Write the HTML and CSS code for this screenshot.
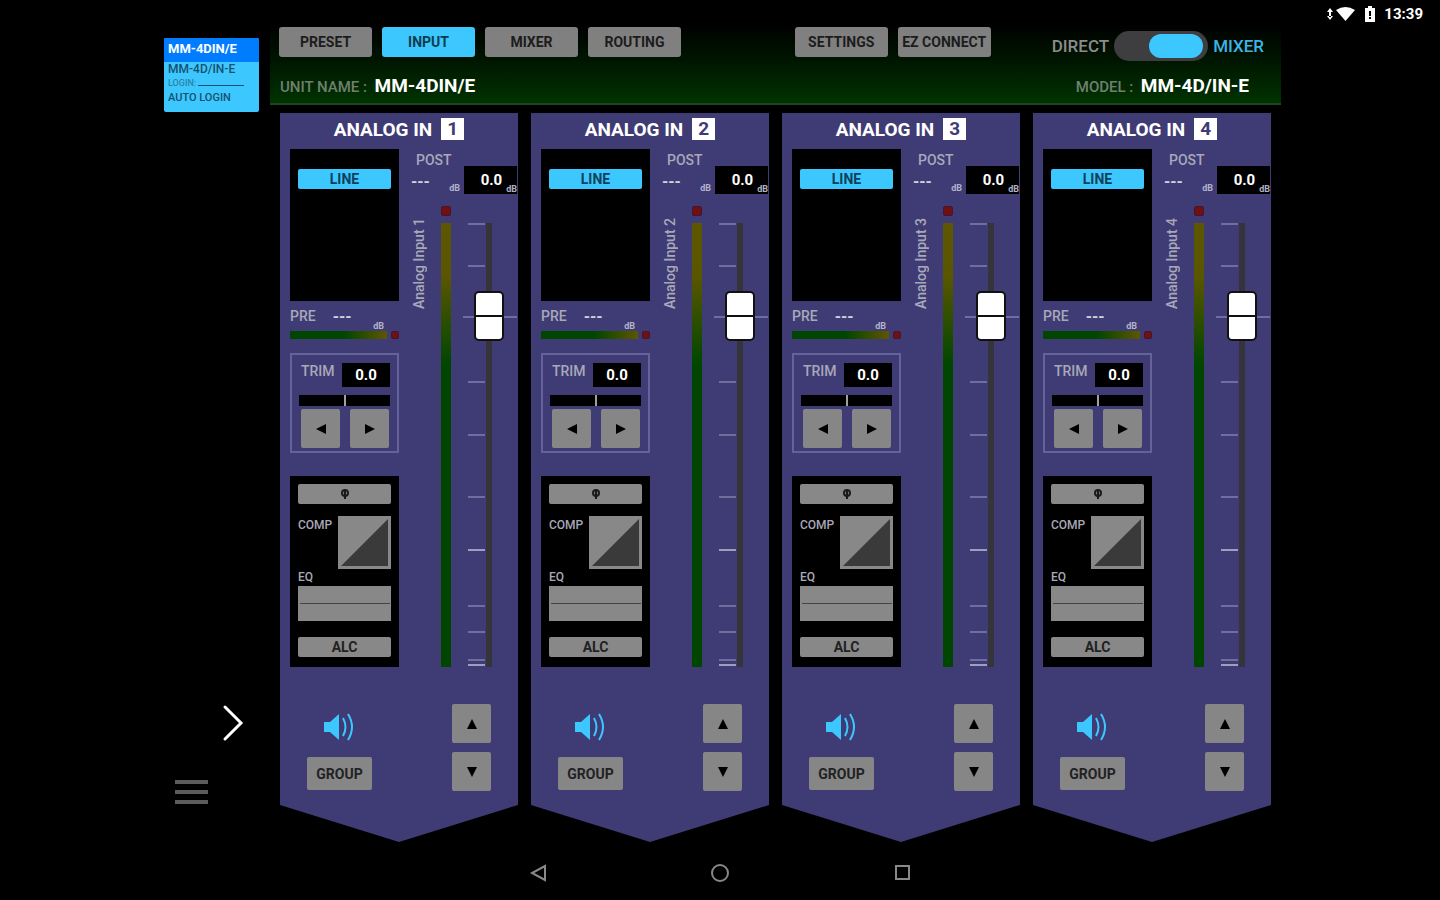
FILE: index.html
```
<!DOCTYPE html>
<html lang="en">
<head>
    <meta charset="UTF-8">
    <meta name="viewport" content="width=device-width, initial-scale=1.0">
    <title>MM-4D/IN-E Mixer</title>
    <link rel="stylesheet" href="styles.css">
</head>
<body>

<div class="status-bar">
    <svg width="30" height="16" viewBox="0 0 30 16" fill="#fff">
        <path d="M4 2l3 4H1zM4 14l3-4H1z M3 5h2v6H3z"/>
        <path d="M10 4Q19.500 -2 29 4L19.500 15z"/>
    </svg>
    <svg width="10" height="16" viewBox="0 0 10 16">
        <path d="M3 0h4v2h3v14H0V2h3z" fill="#fff"/>
        <path d="M4 5h2v5H4zM4 11h2v2H4z" fill="#000"/>
    </svg>
    <span>13:39</span>
</div>

<div class="app">
    <aside class="sidebar">
        <div class="device">
            <div class="device-name">MM-4DIN/E</div>
            <div class="device-model">MM-4D/IN-E</div>
            <div class="device-login">LOGIN: <span class="login-line"></span></div>
            <div class="device-auto">AUTO LOGIN</div>
        </div>
        <button class="icon-btn next-btn" aria-label="Next">
            <svg width="22" height="38" viewBox="0 0 22 38" fill="none" stroke="#fff" stroke-width="3" stroke-linecap="round"><path d="M3 3l16 16L3 35"/></svg>
        </button>
        <button class="icon-btn menu-btn" aria-label="Menu">
            <svg width="34" height="28" viewBox="0 0 34 28" fill="#5c5c5c"><path d="M0 2h33v4H0zM0 12h33v4H0zM0 22h33v4H0z"/></svg>
        </button>
    </aside>

    <main class="main">
        <header class="header">
            <div class="toolbar">
                <nav class="tabs">
                    <button class="tab">PRESET</button>
                    <button class="tab active">INPUT</button>
                    <button class="tab">MIXER</button>
                    <button class="tab">ROUTING</button>
                </nav>
                <div class="tabs tools">
                    <button class="tab">SETTINGS</button>
                    <button class="tab">EZ CONNECT</button>
                </div>
                <label class="mode"><span>DIRECT</span><input type="checkbox" class="switch" checked><span class="mode-on">MIXER</span></label>
            </div>
            <div class="unit-info">
                <div><span class="info-label">UNIT NAME :</span> <strong>MM-4DIN/E</strong></div>
                <div><span class="info-label">MODEL :</span> <strong>MM-4D/IN-E</strong></div>
            </div>
        </header>

        <div class="strips" id="strips">
            <section class="strip">
                <h2>ANALOG IN <span class="num">1</span></h2>
                <div class="strip-body">
                    <div class="left">
                        <div class="source"><button class="key on">LINE</button></div>
                        <div class="pre"><span>PRE</span><span class="dashes">---</span><span class="db">dB</span></div>
                        <div class="pre-meter"><i class="bar"></i><i class="clip"></i></div>
                        <div class="trim">
                            <div class="trim-head"><span>TRIM</span><output class="value">0.0</output></div>
                            <input type="range" class="trim-slider" aria-label="Trim">
                            <div class="trim-keys">
                                <button class="square" aria-label="Trim down"><svg width="12" height="12" viewBox="0 0 12 12"><path d="M11 1v10L1 6z"/></svg></button>
                                <button class="square" aria-label="Trim up"><svg width="12" height="12" viewBox="0 0 12 12"><path d="M1 1v10l10-5z"/></svg></button>
                            </div>
                        </div>
                        <div class="dsp">
                            <button class="key phase" aria-label="Phase">
                                <svg width="12" height="12" viewBox="0 0 12 12" fill="none" stroke="#1a1a1a" stroke-width="2"><circle cx="6" cy="5" r="3"/><path d="M6 3v8"/></svg>
                            </button>
                            <div class="comp">
                                <span>COMP</span>
                                <svg width="53" height="53" viewBox="0 0 53 53"><path d="M0 0h53v53H0z" fill="#888"/><path d="M50 3v47H3z" fill="#3a3a3a"/></svg>
                            </div>
                            <span class="eq-label">EQ</span>
                            <div class="eq"></div>
                            <button class="key">ALC</button>
                        </div>
                    </div>
                    <div class="right">
                        <div class="post">
                            <div class="post-level">
                                <span class="post-label">POST</span>
                                <div class="post-read"><span class="dashes">---</span><span class="db">dB</span></div>
                            </div>
                            <div class="value post-value"><output>0.0</output><span class="db">dB</span></div>
                        </div>
                        <div class="levels">
                            <span class="ch-name">Analog Input <b>1</b></span>
                            <div class="meter"><i class="clip"></i><i class="bar"></i></div>
                            <div class="fader">
                                <svg width="56" height="444" viewBox="0 0 56 444" stroke="#706e9e" stroke-width="2">
                                    <path d="M25 0h6v444h-6z" fill="#34343a" stroke="none"/>
                                    <path d="M7 1h17M7 43h17M2 94h54M7 159h17M7 212h17M7 274h17M7 327h17M7 383h17M7 409h17M7 437h17"/>
                                    <path d="M7 327h17M7 442h17" stroke="#a09ebe"/>
                                </svg>
                                <input type="range" min="0" max="1000" value="827" aria-label="Level">
                            </div>
                        </div>
                    </div>
                </div>
                <div class="strip-foot">
                    <div class="foot-left">
                        <button class="icon-btn" aria-label="Mute">
                            <svg width="32" height="30" viewBox="0 0 32 30" fill="none" stroke="#3cc8ff" stroke-width="2"><path d="M0 10h6l9-8v26l-9-8H0z" fill="#3cc8ff" stroke="none"/><path d="M19 6q5 9 0 18M24 2q8 13 0 26"/></svg>
                        </button>
                        <button class="group">GROUP</button>
                    </div>
                    <div class="foot-right">
                        <button class="square" aria-label="Level up"><svg width="12" height="12" viewBox="0 0 12 12"><path d="M1 11h10L6 1z"/></svg></button>
                        <button class="square" aria-label="Level down"><svg width="12" height="12" viewBox="0 0 12 12"><path d="M1 1h10L6 11z"/></svg></button>
                    </div>
                </div>
            </section>
        </div>
    </main>
</div>

<nav class="system-nav">
    <button class="icon-btn" aria-label="Back"><svg width="20" height="20" viewBox="0 0 20 20"><path d="M17 3v14L4 10z"/></svg></button>
    <button class="icon-btn" aria-label="Home"><svg width="20" height="20" viewBox="0 0 20 20"><circle cx="10" cy="10" r="8"/></svg></button>
    <button class="icon-btn" aria-label="Recent"><svg width="20" height="20" viewBox="0 0 20 20"><path d="M4 3h13v13H4z"/></svg></button>
</nav>

<script>
    // All channels share the layout of the first strip
    const strips = document.getElementById('strips');
    const first = strips.querySelector('.strip');

    for (let i = 2; i <= 4; i++) {
        const strip = first.cloneNode(true);
        strip.querySelector('.num').textContent = i;
        strip.querySelector('.ch-name b').textContent = i;
        strips.appendChild(strip);
    }
</script>

</body>
</html>
```
FILE: styles.css
```
* { box-sizing: border-box; }
body {
    margin: 0;
    min-height: 100vh;
    display: flex;
    flex-direction: column;
    background: #000;
    color: #a8a8b8;
    font-family: Roboto, Arial, sans-serif;
    font-size: 14px;
    font-weight: 500;
}
button {
    font-family: inherit;
    padding: 0;
    border: none;
    cursor: pointer;
}
svg { display: block; }
.icon-btn { background: none; }

/* Android status bar */
.status-bar {
    height: 24px;
    padding: 4px 17px 0 0;
    display: flex;
    justify-content: flex-end;
    align-items: center;
    gap: 9px;
    color: #fff;
    font-size: 15px;
    font-weight: bold;
}

.app {
    flex: 1;
    display: flex;
    padding: 0 159px 0 164px;
}

/* Device list */
.sidebar {
    width: 106px;
    padding: 14px 11px 36px 0;
    display: flex;
    flex-direction: column;
}
.device {
    height: 74px;
    background: #3cc8ff;
    border-radius: 2px;
    color: #16506e;
    overflow: hidden;
    white-space: nowrap;
}
.device div { padding-left: 4px; }
.device .device-name {
    height: 24px;
    line-height: 22px;
    background: #007dff;
    color: #fff;
    font-size: 13px;
    font-weight: bold;
}
.device-model { font-size: 12px; line-height: 15px; }
.device-login { font-size: 9px; line-height: 13px; color: #2c83a8; }
.device-auto { font-size: 11px; line-height: 16px; }
.login-line {
    display: inline-block;
    width: 46px;
    border-bottom: 1px solid #16506e;
}
.next-btn {
    margin-top: auto;
    align-self: flex-end;
    margin-right: 15px;
}
.menu-btn {
    margin: 36px 0 0 11px;
    align-self: flex-start;
}

.main { flex: 1; }

/* Header */
.header {
    height: 81px;
    padding: 3px 0 0 9px;
    background: linear-gradient(#000, #001500 45%, #003300);
    border-bottom: 2px solid #1d4524;
}
.toolbar, .tabs, .mode { display: flex; align-items: center; }
.toolbar { align-items: flex-start; }
.tabs { gap: 10px; }
.tab {
    width: 93px;
    height: 30px;
    border-radius: 3px;
    background: #808080;
    color: #1c1c1c;
    font-size: 14px;
    font-weight: bold;
}
.tab.active { background: #3cc8ff; color: #0c3c50; }
.tools { margin-left: auto; }
.mode {
    margin: 4px 17px 0 61px;
    gap: 5px;
    font-size: 17px;
    color: #8c8c8c;
}
.mode-on { color: #3cb4e6; }
.switch {
    appearance: none;
    width: 94px;
    height: 30px;
    margin: 0;
    padding: 3px 5px;
    border-radius: 15px;
    background: #3e3e40;
    display: flex;
    justify-content: flex-end;
}
.switch::before {
    content: "";
    width: 54px;
    height: 24px;
    border-radius: 12px;
    background: #3cc8ff;
}
.switch:not(:checked) { justify-content: flex-start; }
.unit-info {
    display: flex;
    justify-content: space-between;
    padding: 14px 32px 0 1px;
    line-height: 22px;
}
.info-label { color: #6f806f; font-size: 15px; margin-right: 4px; }
.unit-info strong { color: #fff; font-size: 19px; }

/* Channel strips */
.strips {
    display: grid;
    grid-template-columns: repeat(4, 1fr);
    gap: 13px;
    padding: 8px 10px 0;
}
.strip {
    padding-bottom: 51px;
    background: #3f3b75;
    clip-path: polygon(0 0, 100% 0, 100% calc(100% - 37px), 50% 100%, 0 calc(100% - 37px));
}
.strip h2 {
    height: 36px;
    margin: 0;
    padding-bottom: 4px;
    display: flex;
    justify-content: center;
    align-items: center;
    gap: 9px;
    color: #fff;
    font-size: 19px;
}
.num {
    width: 23px;
    line-height: 22px;
    text-align: center;
    background: #fff;
    color: #3f3b75;
}
.strip-body {
    display: flex;
    justify-content: space-between;
    padding: 0 1px 0 10px;
}
.left { width: 109px; }
.right { width: 108px; }

.key {
    display: block;
    width: 100%;
    height: 20px;
    border-radius: 2px;
    background: #888;
    color: #222;
    font-size: 14px;
    font-weight: bold;
    line-height: 20px;
}
.key.on { background: #3cc8ff; color: #10405a; }
.phase svg { margin: 0 auto; }
.source {
    height: 152px;
    padding: 20px 8px;
    background: #000;
}
.dashes { color: #d0d0dc; font-weight: bold; font-size: 16px; }
.db { font-size: 9px; line-height: 10px; color: #b4b4c8; font-weight: bold; }
.pre {
    height: 30px;
    display: flex;
    align-items: center;
}
.pre .dashes { margin-left: 17px; }
.pre .db { margin-left: auto; margin-right: 15px; align-self: flex-end; }
.clip { background: #701010; border: 1px solid #451530; border-radius: 2px; }
.pre-meter {
    display: flex;
    gap: 4px;
    margin-bottom: 14px;
}
.pre-meter .bar {
    flex: 1;
    background: linear-gradient(to right, #004600 55%, #5e5600);
}
.pre-meter .clip { width: 8px; height: 8px; }

.value {
    background: #000;
    color: #fff;
    font-size: 15px;
    font-weight: bold;
}
.trim {
    height: 100px;
    padding: 8px 7px;
    border: 2px solid #65629a;
}
.trim-head {
    display: flex;
    justify-content: space-between;
    padding-left: 2px;
    line-height: 16px;
}
.trim-head .value {
    width: 48px;
    line-height: 24px;
    text-align: center;
}
.trim-slider {
    appearance: none;
    display: block;
    width: 100%;
    height: 11px;
    margin: 8px 0 3px;
    background: #000;
}
.trim-slider::-webkit-slider-thumb {
    appearance: none;
    width: 2px;
    height: 11px;
    background: #a0a0a0;
}
.trim-keys { display: flex; justify-content: space-between; padding: 0 1px 0 2px; }
.square {
    width: 39px;
    height: 39px;
    border-radius: 2px;
    background: #868686;
    display: flex;
    justify-content: center;
    align-items: center;
}

.dsp {
    height: 191px;
    margin-top: 23px;
    padding: 8px;
    background: #000;
    font-size: 12px;
}
.comp {
    display: flex;
    justify-content: space-between;
    margin-top: 12px;
    line-height: 18px;
}
.comp svg { flex: none; }
.eq-label { display: block; line-height: 17px; }
.eq {
    height: 35px;
    margin-bottom: 16px;
    background: linear-gradient(#444, #444) center / 90px 1px no-repeat #888;
}

.post { display: flex; height: 45px; }
.post-level { flex: 1; }
.post-label { display: block; padding-left: 7px; line-height: 22px; }
.post-read {
    display: flex;
    justify-content: space-between;
    padding: 0 4px 0 2px;
    line-height: 22px;
}
.post-read .db { align-self: flex-end; }
.post-value {
    width: 53px;
    height: 28px;
    align-self: flex-end;
    display: flex;
    justify-content: flex-end;
    align-items: center;
    gap: 4px;
}
.post-value .db { align-self: flex-end; }
.levels {
    display: flex;
    padding-top: 12px;
}
.ch-name {
    width: 20px;
    margin: 12px 12px 0 0;
    align-self: flex-start;
    writing-mode: vertical-rl;
    transform: rotate(180deg);
    line-height: 20px;
    font-size: 14px;
    white-space: nowrap;
}
.ch-name b { font-weight: inherit; }
.meter { width: 10px; }
.meter i { display: block; }
.meter .clip { height: 10px; }
.meter .bar {
    height: 444px;
    margin-top: 7px;
    background: linear-gradient(#5e5600, #5a5600 12%, #004600 32%);
}
.fader {
    display: grid;
    justify-items: center;
    margin: 17px 0 0 auto;
}
.fader svg, .fader input { grid-area: 1 / 1; }
.fader input {
    appearance: none;
    writing-mode: vertical-lr;
    direction: rtl;
    width: 30px;
    height: 444px;
    margin: 0;
    background: none;
}
.fader input::-webkit-slider-thumb {
    appearance: none;
    width: 30px;
    height: 50px;
    border: 2px solid #111;
    border-radius: 5px;
    background: linear-gradient(#111, #111) center / 100% 2px no-repeat #fff;
}

.strip-foot {
    display: flex;
    justify-content: space-between;
    padding: 37px 27px 0;
}
.foot-left, .foot-right {
    display: flex;
    flex-direction: column;
    align-items: center;
}
.foot-left { padding-top: 8px; gap: 15px; }
.foot-right { gap: 9px; }
.group {
    width: 65px;
    height: 33px;
    border-radius: 2px;
    background: #868686;
    color: #222;
    font-size: 14px;
    font-weight: bold;
}

/* Android navigation */
.system-nav {
    height: 58px;
    padding-top: 4px;
    display: flex;
    justify-content: center;
    align-items: center;
    gap: 162px;
}
.system-nav svg { fill: none; stroke: #888; stroke-width: 2; }
```
